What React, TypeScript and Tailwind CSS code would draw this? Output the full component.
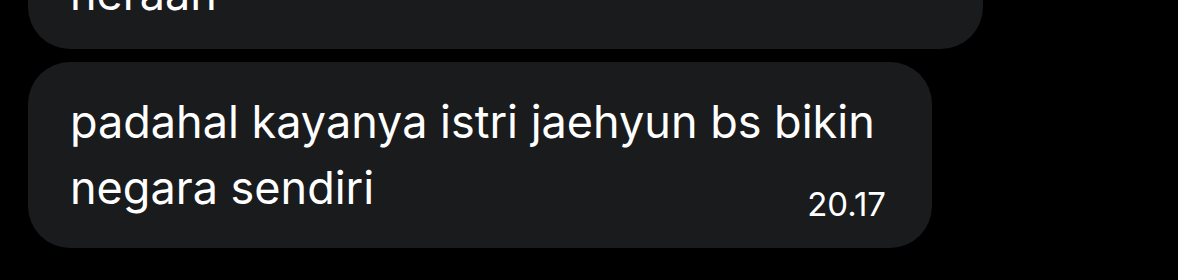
const Bubble = ({ className, children }: { className?: string; children: React.ReactNode }) => (
  <div className={`rounded-[42px] bg-[#1a1b1d] text-white ${className ?? ''}`}>{children}</div>
);

export default function App() {
  return (
    <div
      className="h-[280px] w-[1178px] overflow-hidden bg-black"
      style={{ fontFamily: 'Inter, "Noto Sans", sans-serif' }}
    >
      <div className="flex flex-col gap-[13px] pl-[28px]">
        <Bubble className="mt-[-66px] w-[955px] px-[42px] pt-[27px] pb-[22px]">
          <p className="text-[45px] leading-[66px]">heraan</p>
        </Bubble>

        <Bubble className="w-[904px] pl-[42px] pr-[46px] pt-[27px] pb-[27px]">
          <p className="whitespace-nowrap text-[45px] leading-[66px]">padahal kayanya istri jaehyun bs bikin</p>
          <div className="flex items-end justify-between">
            <p className="text-[45px] leading-[66px]">negara sendiri</p>
            <span className="text-[33px] leading-[33px]">20.17</span>
          </div>
        </Bubble>
      </div>
    </div>
  );
}
